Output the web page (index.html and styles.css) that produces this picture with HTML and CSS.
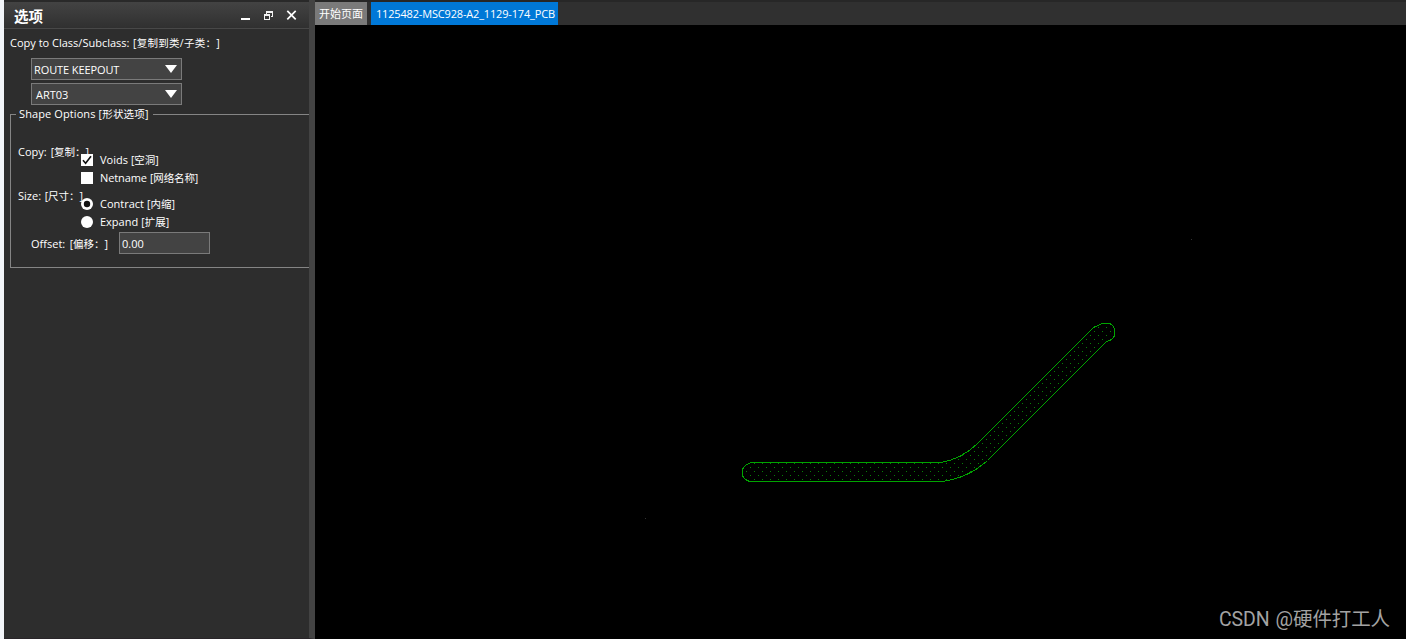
FILE: index.html
```html
<!DOCTYPE html>
<html lang="zh-CN">
<head>
<meta charset="utf-8">
<title>PCB</title>
<link rel="stylesheet" href="styles.css">
</head>
<body>
<div class="app">
  <aside class="panel">
    <header class="titlebar">
      <h1 class="title">选项</h1>
      <svg class="window-buttons" width="60" height="16" viewBox="0 0 60 16">
        <path d="M1 10h9v2H1z" fill="#fff"/>
        <path d="M26 3h7v6h-2v-1h1V5h-5v1h-1zM24 6h6v6h-6zM25 8v3h4V8z" fill="#f2f2f2" fill-rule="evenodd"/>
        <path d="M47.3 2.8l8.4 8.600M55.7 2.8l-8.4 8.600" stroke="#fff" stroke-width="1.7"/>
      </svg>
    </header>
    <div class="row class-label"><span class="t">Copy to Class/Subclass:</span><span class="t cjk">[复制到类/子类：]</span></div>
    <div class="select"><span class="t route">ROUTE KEEPOUT</span><svg width="12" height="8"><path d="M0 0h12L6 8z" fill="#fff"/></svg></div>
    <div class="select second"><span class="t">ART03</span><svg width="12" height="8"><path d="M0 0h12L6 8z" fill="#fff"/></svg></div>
    <section class="group">
      <div class="legend"><i class="stub"></i><span class="t shape">Shape Options</span><span class="t cjk">[形状选项]</span><i class="rule"></i></div>
      <div class="group-body">
        <div class="options">
          <div class="labels">
            <div class="row copy"><span class="t">Copy:</span><span class="t cjk">[复制：]</span></div>
            <div class="row size"><span class="t">Size:</span><span class="t cjk">[尺寸：]</span></div>
          </div>
          <div class="choices">
            <div class="choice"><svg width="12" height="12"><path d="M0 0h12v12H0z" fill="#fff"/><path d="M2 6.200l2.600 3L10 2.200" fill="none" stroke="#111" stroke-width="1.600"/></svg><span class="t">Voids</span><span class="t cjk">[空洞]</span></div>
            <div class="choice netname"><svg width="12" height="12"><path d="M0 0h12v12H0z" fill="#fff"/></svg><span class="t">Netname</span><span class="t cjk">[网络名称]</span></div>
            <div class="choice radio"><svg width="12" height="12"><circle cx="6" cy="6" r="6" fill="#fff"/><circle cx="6" cy="6" r="3.200" fill="#111"/></svg><span class="t">Contract</span><span class="t cjk">[内缩]</span></div>
            <div class="choice"><svg width="12" height="12"><circle cx="6" cy="6" r="6" fill="#fff"/></svg><span class="t">Expand</span><span class="t cjk">[扩展]</span></div>
          </div>
        </div>
        <div class="offset"><div class="row offset-label"><span class="t">Offset:</span><span class="t cjk">[偏移：]</span></div><div class="input t">0.00</div></div>
      </div>
    </section>
  </aside>
  <main class="workspace">
    <nav class="tabs">
      <div class="tab start">开始页面</div>
      <div class="tab active">1125482-MSC928-A2_1129-174_PCB</div>
    </nav>
    <div class="canvas">
      <svg class="board" width="1091" height="614" viewBox="315 25 1091 614" shape-rendering="crispEdges">
        <defs>
          <pattern id="dots" x="746" y="463" width="8" height="8" patternUnits="userSpaceOnUse">
            <path d="M0 0h1v1H0zM4 4h1v1H4z" fill="#087d08"/>
          </pattern>
        </defs>
        <path d="M751.5 462.5H940.5Q961 459.500 977.500 443.500L1093.500 327.500L1102.500 323.500H1109.500Q1114.500 325.500 1114.500 330.500V335.500Q1113 340 1106.500 341.500L987.500 460.500Q967.500 478.500 941.500 481.500H749.500Q742.500 478.500 742.500 474.500V469.500Q744.500 464.500 751.500 462.500Z" fill="url(#dots)" stroke="#00a400"/>
        <path d="M1191 239h1v1h-1zM645 518h1v1h-1z" fill="#333"/>
      </svg>
      <div class="watermark"><span>CSDN</span><span>@硬件打工人</span></div>
    </div>
  </main>
</div>
</body>
</html>
```
FILE: styles.css
```css
* { box-sizing: border-box; }
body { margin: 0; overflow: hidden; background: #f2f5f9; font-family: "Open Sans", "Noto Sans CJK SC", sans-serif; font-size: 11px; color: #fff; text-spacing-trim: space-all; }
.app { display: flex; width: 1406px; height: 639px; padding-left: 4px; }
.panel { width: 311px; flex: none; background: #2d2d2d; border-right: 6px solid #434343; border-bottom: 1px solid #292529; }
.t { display: block; white-space: nowrap; line-height: 14px; }
.cjk { font-size: 10.5px; }
.titlebar { height: 29px; display: flex; justify-content: space-between; align-items: center; padding: 2px 9px 0 10px; border-top: 2px solid #292929; border-bottom: 1px solid #484848; background: linear-gradient(#434343, #303030); }
.title { margin: 0; padding-top: 1px; font-size: 14.5px; line-height: 20px; font-weight: 700; }
.row { display: flex; justify-content: space-between; }
.class-label { width: 210px; margin: 7px 0 0 6px; }
.class-label .cjk { letter-spacing: 0.27px; }
.select { width: 151px; height: 22px; margin: 8px 0 0 27px; padding: 0 4px 0 2px; display: flex; align-items: center; justify-content: space-between; background: #434343; border: 1px solid #7a7a7a; }
.select .t { padding-top: 2px; }
.select .route { letter-spacing: -0.1px; }
.select.second { margin-top: 3px; padding-left: 4px; }
.group { margin: 2px 0 0 6px; }
.legend { display: flex; height: 14px; align-items: center; gap: 3px; }
.legend .shape { letter-spacing: 0.1px; }
.legend .cjk { margin-right: 1px; letter-spacing: 0.2px; }
.legend i { height: 1px; background: #858585; }
.stub { width: 6px; }
.rule { flex: 1; }
.group-body { height: 154px; margin-top: -7px; border-left: 1px solid #858585; border-bottom: 1px solid #858585; }
.options { height: 118px; display: flex; }
.labels { width: 70px; padding: 31px 0 0 7px; }
.labels .copy { width: 71px; height: 44px; }
.labels .size { width: 65px; }
.choices { padding-top: 37px; }
.choice { display: flex; height: 18px; align-items: center; }
.choice svg { margin-right: 7px; }
.choice .t + .t { margin-left: 3px; }
.netname .t { letter-spacing: -0.1px; }
.choice.radio { margin-top: 8px; }
.offset { display: flex; padding-left: 20px; }
.offset-label { width: 77px; padding-top: 5px; }
.input { width: 91px; height: 22px; margin-left: 11px; padding: 4px 2px; background: #434343; border: 1px solid #7a7a7a; }
.workspace { width: 1091px; flex: none; }
.tabs { display: flex; gap: 4px; height: 25px; padding-top: 2px; background: linear-gradient(#272727 2px, #303030 2px); }
.tab { height: 23px; padding-left: 4px; line-height: 23px; white-space: nowrap; }
.tab.start { width: 52px; background: #7a7a7a; }
.tab.active { width: 187px; padding-left: 5px; background: #0078d7; letter-spacing: -0.17px; }
.canvas { position: relative; height: 614px; background: #000; }
.board { display: block; }
.watermark { position: absolute; right: 16px; bottom: 4px; display: flex; gap: 6px; font-family: Roboto, "Noto Sans CJK SC", sans-serif; font-size: 19.5px; line-height: 30px; font-weight: 400; letter-spacing: -0.1px; color: #a3a3a3; }
```
